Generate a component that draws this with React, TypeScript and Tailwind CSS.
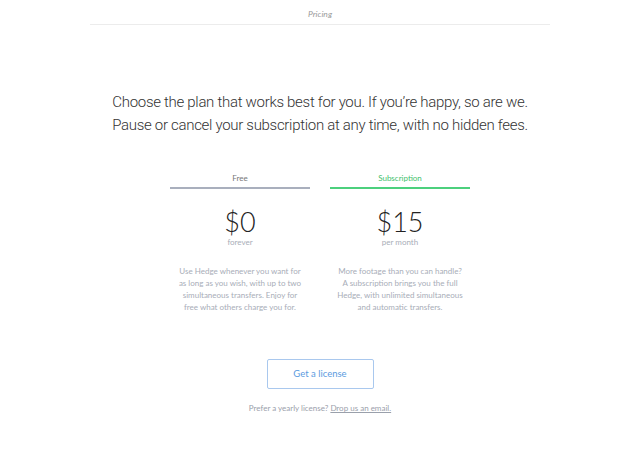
import React from 'react';

const plans = [
  {
    name: 'Free',
    price: '$0',
    period: 'forever',
    active: false,
    blurb: ['Use Hedge whenever you want for', 'as long as you wish, with up to two', 'simultaneous transfers. Enjoy for', 'free what others charge you for.'],
  },
  {
    name: 'Subscription',
    price: '$15',
    period: 'per month',
    active: true,
    blurb: ['More footage than you can handle?', 'A subscription brings you the full', 'Hedge, with unlimited simultaneous', 'and automatic transfers.'],
  },
];

const App: React.FC = () => {
  return (
    <div className="min-h-[471px] w-full bg-white" style={{ fontFamily: 'Lato, "Open Sans", sans-serif' }}>
      <div className="mx-auto w-[460px] border-b border-[#ececec] pt-[8px] pb-[4px] text-center text-[8.5px] leading-[12px] italic text-[#9a9a9a]">
        Pricing
      </div>

      <div
        className="mt-[66px] text-center text-[15px] font-light leading-[23px] tracking-[-0.3px] text-[#333]"
        style={{ fontFamily: 'Roboto, Lato, sans-serif' }}
      >
        <p>Choose the plan that works best for you. If you’re happy, so are we.</p>
        <p>Pause or cancel your subscription at any time, with no hidden fees.</p>
      </div>

      <div className="mt-[35px] flex justify-center gap-[20px]">
        {plans.map((plan) => (
          <div key={plan.name} className="w-[140px] text-center">
            <div
              className={
                plan.active
                  ? 'border-b-2 border-[#4cd07d] pb-[3px] text-[8px] leading-[12px] text-[#3fbf6c]'
                  : 'border-b-2 border-[#a9afbd] pb-[3px] text-[8px] leading-[12px] text-[#777]'
              }
            >
              {plan.name}
            </div>
            <div className="mt-[18px] text-[27px] font-light leading-[30px] text-[#222]">{plan.price}</div>
            <div className="text-[8px] leading-[10px] text-[#a8adb8]">{plan.period}</div>
            <div className="mt-[18px] flex flex-col items-center whitespace-nowrap text-[8px] leading-[12px] text-[#a8adb8]">
              {plan.blurb.map((line) => (
                <span key={line}>{line}</span>
              ))}
            </div>
          </div>
        ))}
      </div>

      <div className="mt-[46px] flex flex-col items-center">
        <button className="h-[30px] w-[107px] rounded-[2px] border border-[#a9c8ee] text-[9.5px] text-[#5b9be0]">
          Get a license
        </button>
        <p className="mt-[13px] text-[8px] text-[#9aa0ab]">
          Prefer a yearly license? <span className="underline">Drop us an email.</span>
        </p>
      </div>
    </div>
  );
};

export default App;
